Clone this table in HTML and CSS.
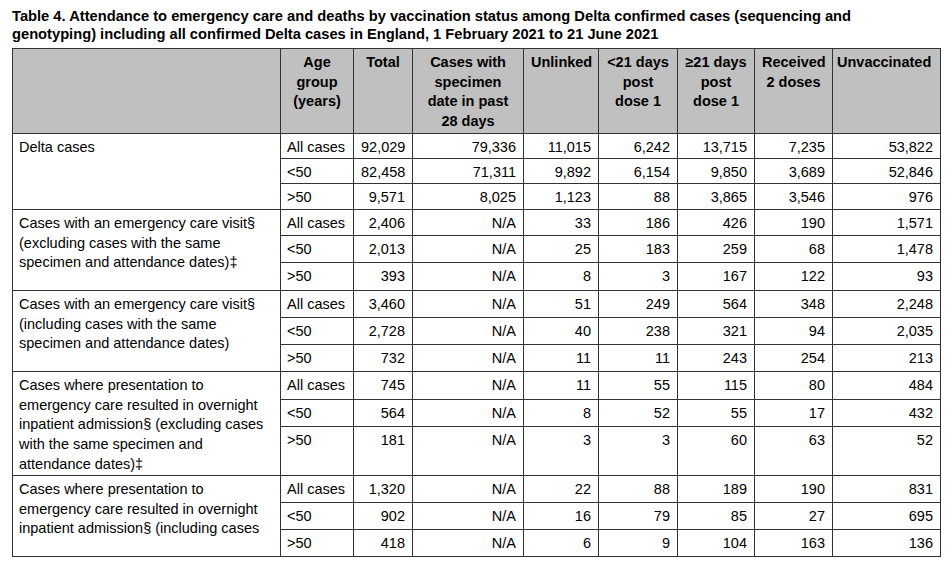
FILE: index.html
```html
<!DOCTYPE html>
<html>
<head>
<meta charset="utf-8">
<link rel="stylesheet" href="styles.css">
</head>
<body>
<h1 class="title">Table 4. Attendance to emergency care and deaths by vaccination status among Delta confirmed cases (sequencing and genotyping) including all confirmed Delta cases in England, 1 February 2021 to 21 June 2021</h1>
<table class="data">
<colgroup>
<col class="c-label"><col class="c-age"><col class="c-total"><col class="c-spec"><col class="c-unl"><col class="c-lt21"><col class="c-ge21"><col class="c-two"><col class="c-unv">
</colgroup>
<thead>
<tr class="h-head">
<th></th>
<th>Age<br>group<br>(years)</th>
<th>Total</th>
<th>Cases with<br>specimen<br>date in past<br>28 days</th>
<th>Unlinked</th>
<th>&lt;21 days<br>post<br>dose 1</th>
<th>≥21 days<br>post<br>dose 1</th>
<th>Received<br>2 doses</th>
<th class="left">Unvaccinated</th>
</tr>
</thead>
<tbody>
<tr class="h25"><td rowspan="3" class="label">Delta cases</td><td class="age">All cases</td><td>92,029</td><td>79,336</td><td>11,015</td><td>6,242</td><td>13,715</td><td>7,235</td><td>53,822</td></tr>
<tr class="h25"><td class="age">&lt;50</td><td>82,458</td><td>71,311</td><td>9,892</td><td>6,154</td><td>9,850</td><td>3,689</td><td>52,846</td></tr>
<tr class="h26"><td class="age">&gt;50</td><td>9,571</td><td>8,025</td><td>1,123</td><td>88</td><td>3,865</td><td>3,546</td><td>976</td></tr>

<tr class="h26"><td rowspan="3" class="label">Cases with an emergency care visit§<br>(excluding cases with the same<br>specimen and attendance dates)‡</td><td class="age">All cases</td><td>2,406</td><td>N/A</td><td>33</td><td>186</td><td>426</td><td>190</td><td>1,571</td></tr>
<tr class="h27"><td class="age">&lt;50</td><td>2,013</td><td>N/A</td><td>25</td><td>183</td><td>259</td><td>68</td><td>1,478</td></tr>
<tr class="h28"><td class="age">&gt;50</td><td>393</td><td>N/A</td><td>8</td><td>3</td><td>167</td><td>122</td><td>93</td></tr>

<tr class="h27"><td rowspan="3" class="label">Cases with an emergency care visit§<br>(including cases with the same<br>specimen and attendance dates)</td><td class="age">All cases</td><td>3,460</td><td>N/A</td><td>51</td><td>249</td><td>564</td><td>348</td><td>2,248</td></tr>
<tr class="h27"><td class="age">&lt;50</td><td>2,728</td><td>N/A</td><td>40</td><td>238</td><td>321</td><td>94</td><td>2,035</td></tr>
<tr class="h27"><td class="age">&gt;50</td><td>732</td><td>N/A</td><td>11</td><td>11</td><td>243</td><td>254</td><td>213</td></tr>

<tr class="h28"><td rowspan="3" class="label">Cases where presentation to<br>emergency care resulted in overnight<br>inpatient admission§ (excluding cases<br>with the same specimen and<br>attendance dates)‡</td><td class="age">All cases</td><td>745</td><td>N/A</td><td>11</td><td>55</td><td>115</td><td>80</td><td>484</td></tr>
<tr class="h27"><td class="age">&lt;50</td><td>564</td><td>N/A</td><td>8</td><td>52</td><td>55</td><td>17</td><td>432</td></tr>
<tr class="h49"><td class="age">&gt;50</td><td>181</td><td>N/A</td><td>3</td><td>3</td><td>60</td><td>63</td><td>52</td></tr>

<tr class="h27"><td rowspan="3" class="label">Cases where presentation to<br>emergency care resulted in overnight<br>inpatient admission§ (including cases</td><td class="age">All cases</td><td>1,320</td><td>N/A</td><td>22</td><td>88</td><td>189</td><td>190</td><td>831</td></tr>
<tr class="h27"><td class="age">&lt;50</td><td>902</td><td>N/A</td><td>16</td><td>79</td><td>85</td><td>27</td><td>695</td></tr>
<tr class="h27"><td class="age">&gt;50</td><td>418</td><td>N/A</td><td>6</td><td>9</td><td>104</td><td>163</td><td>136</td></tr>
</tbody>
</table>
</body>
</html>
```

FILE: styles.css
```css
html, body {
  margin: 0;
  background: #ffffff;
}
body {
  padding: 7px 12px 0 12px;
  font-family: "Liberation Sans", Arial, sans-serif;
  color: #000;
}
.title {
  margin: 0 0 5px 0;
  font-size: 14.7px;
  line-height: 18px;
  font-weight: bold;
  width: 910px;
}
.data {
  border-collapse: collapse;
  table-layout: fixed;
  width: 928px;
  font-size: 14.5px;
  line-height: 19.7px;
  border: 1px solid #2e2e2e;
}
.c-label { width: 268px; }
.c-age { width: 73px; }
.c-total { width: 59px; }
.c-spec { width: 111px; }
.c-unl { width: 75px; }
.c-lt21 { width: 79px; }
.c-ge21 { width: 77px; }
.c-two { width: 78px; }
.c-unv { width: 108px; }
.data th,
.data td {
  border: 1px solid #333;
  vertical-align: top;
  padding: 4px 7px 0 7px;
  white-space: nowrap;
}
.data th {
  background: #c0c0c0;
  font-weight: bold;
  text-align: center;
}
.data th.left { text-align: left; padding-left: 4px; }
.data td { text-align: right; }
.data td.label, .data td.age { text-align: left; padding-left: 6px; }
.h-head { height: 85px; }
.h25 { height: 25px; }
.h26 { height: 26px; }
.h27 { height: 27px; }
.h28 { height: 28px; }
.h49 { height: 49px; }
```
